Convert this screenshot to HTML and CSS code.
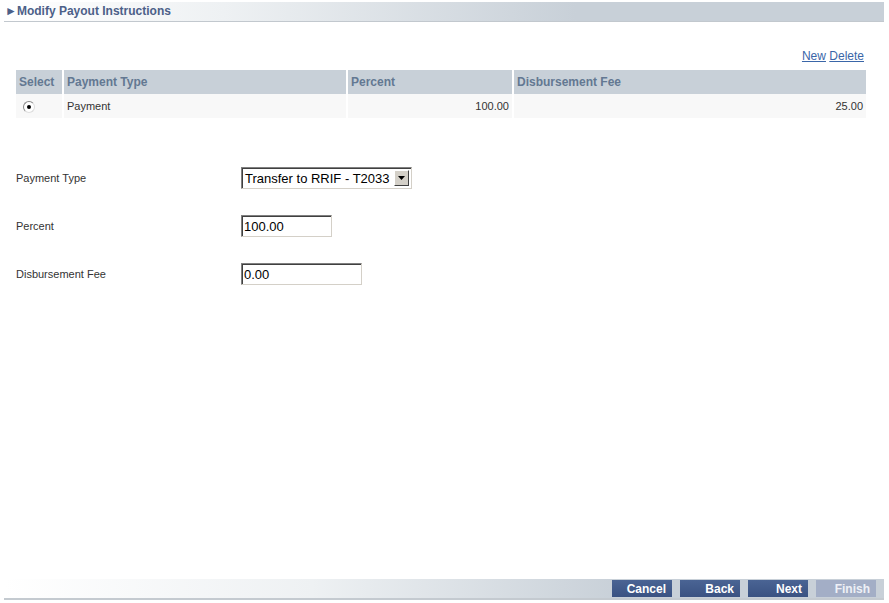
FILE: index.html
```html
<!DOCTYPE html>
<html lang="en">
<head>
    <meta charset="UTF-8" />
    <title>Modify Payout Instructions</title>
    <link rel="stylesheet" href="styles.css">
</head>
<body>
    <div class="page">
        <div class="title-bar">
            <span class="arrow">&#9658;</span>Modify Payout Instructions
        </div>

        <div class="content">
            <div class="table-links">
                <a href="#">New</a> <a href="#">Delete</a>
            </div>

            <table class="grid">
                <thead>
                    <tr>
                        <th class="col-select">Select</th>
                        <th class="col-type">Payment Type</th>
                        <th class="col-percent">Percent</th>
                        <th class="col-fee">Disbursement Fee</th>
                    </tr>
                </thead>
                <tbody>
                    <tr>
                        <td class="col-select"><span class="radio"><span class="dot"></span></span></td>
                        <td>Payment</td>
                        <td class="num">100.00</td>
                        <td class="num">25.00</td>
                    </tr>
                </tbody>
            </table>

            <div class="form">
                <div class="form-row">
                    <label class="form-label">Payment Type</label>
                    <div class="select-box">
                        <span class="select-value">Transfer to RRIF - T2033</span>
                        <span class="select-btn">
                            <svg width="7" height="4" viewBox="0 0 7 4"><path d="M0 0h7L3.5 4z" fill="#000"/></svg>
                        </span>
                    </div>
                </div>
                <div class="form-row">
                    <label class="form-label">Percent</label>
                    <input type="text" class="text-input input-short" value="100.00">
                </div>
                <div class="form-row">
                    <label class="form-label">Disbursement Fee</label>
                    <input type="text" class="text-input input-mid" value="0.00">
                </div>
            </div>
        </div>

        <div class="footer-bar">
            <button type="button" class="nav-button">Cancel</button>
            <button type="button" class="nav-button">Back</button>
            <button type="button" class="nav-button">Next</button>
            <button type="button" class="nav-button disabled">Finish</button>
        </div>
    </div>
</body>
</html>
```

FILE: styles.css
```css
body {
    margin: 0;
    font-family: "Liberation Sans", Arial, sans-serif;
    font-size: 12px;
    color: #333;
    background: #fff;
}

.page {
    display: flex;
    flex-direction: column;
    height: 603px;
    box-sizing: border-box;
    padding: 2px 5px 3px 4px;
}

.title-bar {
    height: 19px;
    line-height: 19px;
    background: linear-gradient(to right, #fff 0%, #eef1f3 25%, #c8d0d8 65%, #c8d0d8 100%);
    border-bottom: 1px solid #c2c8ce;
    color: #4c6088;
    font-weight: bold;
    font-size: 12px;
    padding-left: 1px;
}

.title-bar .arrow {
    font-size: 12px;
}

.content {
    padding: 0 18px 0 12px;
}

.table-links {
    text-align: right;
    margin-top: 26px;
    height: 16px;
    line-height: 16px;
    font-size: 12px;
    padding-right: 2px;
}

.table-links a {
    color: #3a66a8;
}

.grid {
    width: 100%;
    border-collapse: collapse;
    margin-top: 6px;
}

.grid th {
    background: #c8d0d8;
    color: #637892;
    font-weight: bold;
    text-align: left;
    height: 24px;
    padding: 0 3px;
    border-left: 2px solid #fff;
    font-size: 12px;
}

.grid th:first-child,
.grid td:first-child {
    border-left: none;
}

.grid td {
    background: #f8f8f8;
    height: 24px;
    padding: 0 3px;
    border-left: 2px solid #fff;
    font-size: 11px;
    color: #333;
}

.grid td.num {
    text-align: right;
}

.col-select { width: 40px; }
.col-type { width: 276px; }
.col-percent { width: 158px; }

.radio {
    display: inline-block;
    width: 10px;
    height: 10px;
    border: 1px solid #888;
    border-right-color: #ddd;
    border-bottom-color: #ddd;
    border-radius: 50%;
    background: #fff;
    position: relative;
    margin-left: 4px;
    vertical-align: middle;
}

.radio .dot {
    position: absolute;
    left: 3px;
    top: 3px;
    width: 4px;
    height: 4px;
    border-radius: 50%;
    background: #000;
}

.form {
    margin-top: 49px;
}

.form-row {
    display: flex;
    align-items: center;
    height: 22px;
    margin-bottom: 26px;
}

.form-label {
    width: 225px;
    font-size: 11px;
    color: #333;
}

.select-box {
    display: flex;
    align-items: center;
    width: 171px;
    height: 22px;
    box-sizing: border-box;
    border: 1px solid #808080;
    border-right-color: #d4d0c8;
    border-bottom-color: #d4d0c8;
    box-shadow: inset 1px 1px 0 #404040;
    background: #fff;
}

.select-value {
    flex: 1;
    font-size: 13px;
    color: #000;
    padding-left: 3px;
    white-space: nowrap;
}

.select-btn {
    width: 15px;
    height: 16px;
    margin-right: 2px;
    background: #d4d0c8;
    border: 1px solid #fff;
    border-right-color: #404040;
    border-bottom-color: #404040;
    display: flex;
    align-items: center;
    justify-content: center;
    box-sizing: border-box;
}

.text-input {
    height: 22px;
    box-sizing: border-box;
    border: 1px solid #808080;
    border-right-color: #d4d0c8;
    border-bottom-color: #d4d0c8;
    box-shadow: inset 1px 1px 0 #404040;
    font-family: "Liberation Sans", Arial, sans-serif;
    font-size: 13px;
    color: #000;
    padding: 0 2px;
    margin: 0;
}

.input-short { width: 91px; }
.input-mid { width: 121px; }

.footer-bar {
    margin-top: auto;
    height: 19px;
    background: linear-gradient(to right, #fff 0%, #eef1f3 35%, #c8d0d8 70%, #c8d0d8 100%);
    border-bottom: 2px solid #c4cad0;
    display: flex;
    justify-content: flex-end;
    align-items: center;
    gap: 8px;
    padding-right: 8px;
}

.nav-button {
    width: 60px;
    height: 17px;
    border: none;
    background: linear-gradient(#4a6494, #3a5282);
    color: #fff;
    font-family: "Liberation Sans", Arial, sans-serif;
    font-weight: bold;
    font-size: 12px;
    text-align: right;
    padding: 0 6px 0 0;
    cursor: pointer;
}

.nav-button.disabled {
    background: #a3aec6;
    color: #eef0f6;
}
```
